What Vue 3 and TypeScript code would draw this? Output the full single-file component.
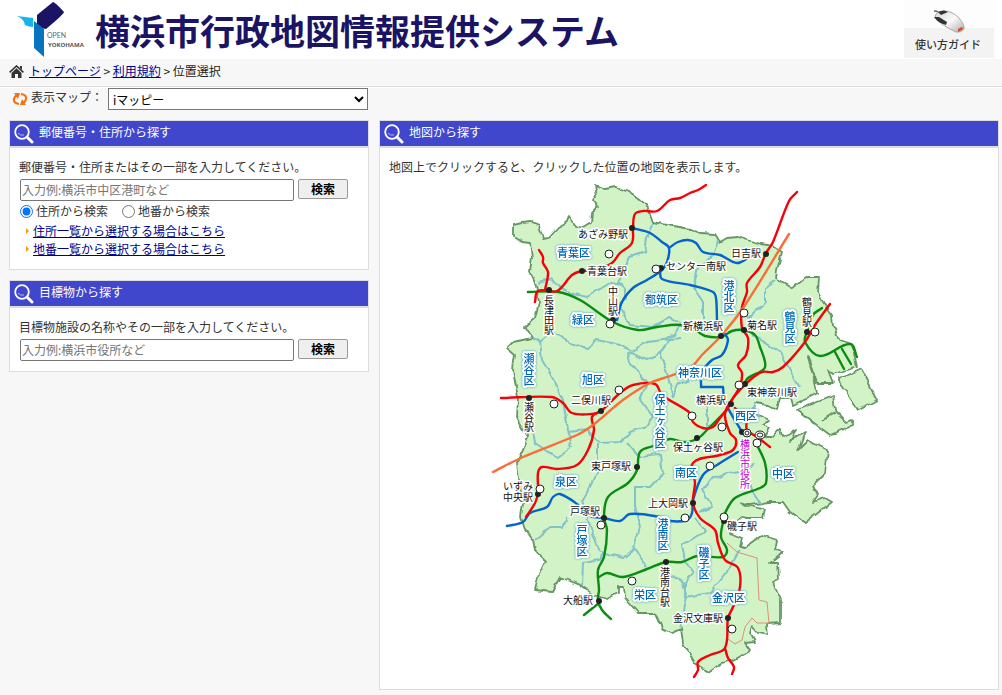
<script setup lang="ts">
import { ref } from 'vue'

interface Label { text: string; x: number; y: number; vertical?: boolean }
type Point = [number, number]

const mapKind = ref('imappy')
const searchMode = ref('address')
const addressQuery = ref('')
const landmarkQuery = ref('')

const wards: Label[] = [
  { text: '青葉区', x: 557, y: 257 },
  { text: '都筑区', x: 645, y: 304 },
  { text: '緑区', x: 572, y: 324 },
  { text: '旭区', x: 582, y: 384 },
  { text: '神奈川区', x: 678, y: 377 },
  { text: '西区', x: 735, y: 420 },
  { text: '南区', x: 675, y: 477 },
  { text: '中区', x: 772, y: 478 },
  { text: '泉区', x: 555, y: 486 },
  { text: '栄区', x: 634, y: 599 },
  { text: '金沢区', x: 712, y: 602 },
  { text: '港北区', x: 729, y: 280, vertical: true },
  { text: '鶴見区', x: 790, y: 311, vertical: true },
  { text: '瀬谷区', x: 529, y: 353, vertical: true },
  { text: '保土ヶ谷区', x: 660, y: 394, vertical: true },
  { text: '戸塚区', x: 582, y: 524, vertical: true },
  { text: '港南区', x: 663, y: 518, vertical: true },
  { text: '磯子区', x: 704, y: 547, vertical: true },
]

const stations: Label[] = [
  { text: 'あざみ野駅', x: 578, y: 238 },
  { text: '青葉台駅', x: 587, y: 275 },
  { text: 'センター南駅', x: 666, y: 270 },
  { text: '日吉駅', x: 731, y: 257 },
  { text: '新横浜駅', x: 683, y: 330 },
  { text: '菊名駅', x: 747, y: 329 },
  { text: '横浜駅', x: 696, y: 404 },
  { text: '東神奈川駅', x: 747, y: 396 },
  { text: '保土ヶ谷駅', x: 673, y: 451 },
  { text: '二俣川駅', x: 571, y: 404 },
  { text: '東戸塚駅', x: 591, y: 470 },
  { text: '戸塚駅', x: 570, y: 515 },
  { text: '上大岡駅', x: 648, y: 507 },
  { text: '磯子駅', x: 727, y: 530 },
  { text: '大船駅', x: 563, y: 604 },
  { text: '金沢文庫駅', x: 673, y: 622 },
  { text: '長津田駅', x: 549, y: 295, vertical: true },
  { text: '中山駅', x: 613, y: 286, vertical: true },
  { text: '鶴見駅', x: 807, y: 297, vertical: true },
  { text: '瀬谷駅', x: 529, y: 402, vertical: true },
  { text: '港南台駅', x: 665, y: 567, vertical: true },
]

const stationDots: Point[] = [
  [632, 228], [582, 271], [549, 290], [661, 268], [613, 320], [766, 254], [721, 336], [744, 330],
  [807, 332], [529, 398], [601, 411], [637, 467], [538, 494], [604, 518], [731, 404], [745, 384],
  [697, 438], [742, 432], [693, 503], [724, 521], [666, 562], [599, 601], [728, 618],
]

const officeDots: Point[] = [
  [609, 254], [656, 269], [610, 324], [744, 313], [815, 332], [619, 390], [554, 404], [739, 385],
  [692, 416], [722, 427], [757, 443], [710, 466], [685, 518], [540, 489], [601, 525], [632, 581],
  [724, 517], [732, 629],
]

const land = [
  'M595 185L605 189L617 187L628 192L637 198L648 208L653 222L667 225L690 229L700 233L715 234L720 242L727 238L738 237L760 244L773 246L782 252L777 270L776 278L793 288L803 280L808 277L819 277L818 292L823 303L832 315L833 327L840 340L852 344L857 367L833 374L828 370L833 383L817 383L808 357L815 383L817 393L793 405L791 398L780 398L777 410L767 405L755 403L752 411L765 418L770 420L762 425L770 428L765 437L772 437L780 428L782 437L790 434L797 430L790 441L805 432L798 450L808 440L813 443L828 450L825 473L813 485L818 495L813 502L825 498L832 502L805 523L790 512L783 502L767 502L745 506L740 503L765 510L763 518L747 518L742 517L734 524L730 533L742 538L740 546L745 547L762 535L777 540L775 550L783 552L778 557L770 563L778 563L779 579L773 582L781 600L781 623L767 624L768 635L758 633L752 626L750 633L755 642L745 643L750 650L733 660L722 663L708 672L695 663L683 643L681 629L672 633L662 628L655 613L638 613L625 598L624 586L618 586L618 593L607 599L593 595L580 585L560 577L552 592L535 590L540 570L547 562L535 550L533 540L525 530L521 517L523 503L520 487L517 463L523 450L528 437L517 417L518 397L513 370L515 355L507 348L513 342L532 338L525 327L535 318L539 302L536 285L530 272L532 258L530 243L522 242L513 237L513 225L522 223L532 222L539 225L543 239L548 238L558 227L567 222L569 215L575 226L583 228L591 223L592 213L598 207L593 200L597 195Z',
  'M797 410L833 395L835 410L847 422L852 420L852 426L830 435Z',
  'M839 379L862 369L877 400L858 410L845 390L839 382Z',
  'M823 420L835 412',
]

const wardBorders = [
  'M653 223L647 238L645 252L630 257L622 275L618 283L625 290L625 298L620 308L630 325L653 327L670 318L680 323L675 335L662 340',
  'M538 283L550 280L570 293L587 297L610 283L623 285',
  'M532 338L540 342L552 332L570 343L587 348L597 340L620 345L632 352L647 342L680 338',
  'M540 340L542 360L552 377L563 400L568 430L572 447L558 458L535 443L533 430',
  'M568 432L587 430L600 443L620 442L630 432L647 427L653 417L640 400L647 383L630 363L628 353L647 360L660 353L670 340',
  'M660 353L667 373L673 397L677 385L690 380',
  'M597 443L597 473L583 500L588 520L600 552',
  'M567 517L563 528L550 528L535 540',
  'M627 442L640 457L660 455L663 473L650 487L635 487L635 507L640 527L633 550L623 558L603 552L600 560L583 563L582 585',
  'M633 545L642 560L645 568M667 572L683 583L687 597L680 628',
  'M695 517L705 532L682 545L685 561L693 573L685 583L685 597L710 593L730 567L740 550',
  'M718 240L713 255L698 268L693 287L703 302L703 318',
  'M775 280L765 288L765 302L748 318L753 335L780 352L800 388',
  'M753 463L748 470L727 473L713 478L703 490L712 507L698 513M748 475L753 493L760 503',
  'M723 403L707 400L707 425L712 428M755 403L752 410L760 417',
]

const blueLines = [
  'M632 228L650 233L662 242L669 248L667 262L662 270L647 280L633 288L622 302L617 320',
  'M669 248L678 242L688 240L696 243L703 252L720 255L737 263L748 258',
  'M660 270L662 279L690 285L713 292L716 298L717 320M725 334L728 340L722 355L712 360L702 372L701 387M701 387L723 387M723 387L725 402L742 432',
  'M738 452L717 465L703 475L693 500L692 513L687 520L670 521L660 517L630 514L620 521L604 518L590 516L577 504L560 494L553 497L547 507L530 513L523 522L507 526',
]

const greenLines = [
  'M528 292L558 292L580 300L613 322L638 330L657 327L680 325L698 332L705 336L721 337L732 331L743 330L755 335L760 347L765 362L764 369L748 378L743 386',
  'M822 308L813 315L807 332L805 342L820 356L850 344L857 357M835 352L844 369M842 349L851 364',
  'M727 410L707 430L697 439L683 442L670 439L653 446L640 452L637 470L628 483L608 497L604 517L607 530L604 557L598 570L599 590L598 600L602 610L611 619M599 603L584 615',
  'M599 577L607 573L623 577L647 569L666 562L682 562L697 556L723 557L727 550L721 537L724 518L725 513L735 498L760 488L766 483L765 463L757 445',
]

const redLines = [
  'M706 185L698 190L690 193L680 198L670 200L657 211L643 211L635 214L633 228L632 243L620 253L612 263L595 270L582 271L572 275L557 291L538 291L535 302',
  'M539 250L543 257L543 263L548 272L545 290',
  'M797 192L789 201L773 242L766 253L760 267L747 283L747 292L742 307L742 328L748 338L746 355L738 365L742 373L740 386L732 400',
  'M830 304L815 325L805 342L783 367L773 372L762 372L750 380L733 398L725 414L730 433L736 440L733 450L720 455L693 463L695 483L693 503L700 518L715 530L718 543L725 560L738 568L740 587L733 607L728 618L725 648L710 655L698 662L698 670L694 677M725 648L728 658L734 667L732 674',
  'M501 398L552 397L563 403L572 413L592 414L601 411L620 393L633 385L655 384L662 395L690 413L693 422L703 428L713 427L720 418L730 405',
  'M601 411L592 417L594 430L588 450L577 465L557 469L542 467L538 473L538 493L535 503L526 517',
  'M735 408L746 420L747 430L757 437L770 447',
]

const shinkansen = 'M789 234L743 308L720 337L702 355L690 368L670 376L650 383L623 400L593 425L577 435L523 457L493 472'
const seasideLine = 'M727 543L737 552L757 558L759 600L767 602L769 623L757 623L752 618L745 627L742 640L735 644L728 639'

/** Turns each polyline of a track into a curve that passes through its points. */
function smooth(track: string): string {
  return track.split('M').filter(Boolean).map((part) => {
    const pts = part.split('L').map((p) => p.split(' ').map(Number) as Point)
    let d = `M${pts[0].join(' ')}`
    for (let i = 0; i < pts.length - 1; i++) {
      const a = pts[Math.max(i - 1, 0)]
      const b = pts[i]
      const c = pts[i + 1]
      const e = pts[Math.min(i + 2, pts.length - 1)]
      const k = Math.hypot(c[0] - b[0], c[1] - b[1]) / 3
      const inLen = Math.hypot(c[0] - a[0], c[1] - a[1]) || 1
      const outLen = Math.hypot(e[0] - b[0], e[1] - b[1]) || 1
      const c1 = [b[0] + (c[0] - a[0]) * k / inLen, b[1] + (c[1] - a[1]) * k / inLen]
      const c2 = [c[0] - (e[0] - b[0]) * k / outLen, c[1] - (e[1] - b[1]) * k / outLen]
      d += `C${c1.join(' ')} ${c2.join(' ')} ${c.join(' ')}`
    }
    return d
  }).join('')
}
</script>

<template>
  <div class="page">
    <header class="masthead">
      <svg class="logo" viewBox="0 0 90 59" role="img" aria-label="OPEN YOKOHAMA">
        <path fill="#16b4ee" d="M17 16L33 18V27Q29 27 25 25Q24 19 17 16Z" />
        <path fill="#1b1464" d="M53 2Q55 2 64 12Q64 14 46 29Q40 28 37 25V15Z" />
        <path fill="#0874bf" d="M34 21L44 29V57L34 48Z" />
        <text class="logo-open" x="47" y="38">OPEN</text>
        <text class="logo-city" x="48" y="47">YOKOHAMA</text>
      </svg>
      <h1>横浜市行政地図情報提供システム</h1>
      <a class="guide" href="#guide">
        <svg class="mouse" viewBox="0 0 36 26" aria-hidden="true">
          <defs>
            <linearGradient id="shell" x1="0" y1="0" x2="1" y2="1">
              <stop offset="0" stop-color="#d4d4d4" /><stop offset=".5" stop-color="#fafafa" /><stop offset="1" stop-color="#aaa" />
            </linearGradient>
          </defs>
          <path d="M2 3Q7 3 8 7" fill="none" stroke="#666" stroke-width="1.5" />
          <path d="M3 10Q3 3 13 3Q20 3 27 10Q33 17 32 21Q29 25 24 24Q9 17 3 10Z" fill="url(#shell)" stroke="#aaa" />
          <path d="M6 4Q12 1 16 4L9 7ZM2 9L7 9L15 14L14 17Q6 15 2 9Z" fill="#333" />
          <path d="M26 21L30 19L31 21L26 24Z" fill="#df471d" />
        </svg>
        <span>使い方ガイド</span>
      </a>
    </header>

    <nav class="crumbs" aria-label="パンくず">
      <svg class="home" viewBox="0 0 15 13" aria-hidden="true">
        <path fill="none" stroke="#333" stroke-width="1.6" d="M0.6 7.4L7.5 1L14.4 7.4" />
        <path fill="#333" d="M2.5 8L7.5 3.2L12.5 8V13H9V9H6V13H2.5ZM11 1H13V5L11 3Z" />
      </svg>
      <a href="#top">トップページ</a><span class="sep">&gt;</span><a href="#terms">利用規約</a><span class="sep">&gt;</span><span>位置選択</span>
    </nav>

    <div class="map-kind">
      <svg class="swap" viewBox="0 0 16 16" aria-hidden="true">
        <g fill="none" stroke="#f47216" stroke-width="2.2">
          <path d="M7 13Q1 12 2 8Q2 6 5 4" />
          <path d="M9 3Q15 4 14 8Q14 10 11 12" />
        </g>
        <path fill="#f47216" d="M2 2L8 2L6 8ZM14 14L8 14L10 8Z" />
      </svg>
      <label for="map-kind">表示マップ：</label>
      <select id="map-kind" v-model="mapKind">
        <option value="imappy">iマッピー</option>
      </select>
    </div>

    <main class="columns">
      <div class="side">
        <section class="panel">
          <h2>
            <svg class="lens" viewBox="0 0 20 20" aria-hidden="true">
              <circle cx="8" cy="8" r="6.8" /><path d="M4 9Q6 12 10 11" class="glint" /><path d="M13 13L18 18" class="grip" />
            </svg>
            郵便番号・住所から探す
          </h2>
          <form class="body" @submit.prevent>
            <label class="lead" for="address">郵便番号・住所またはその一部を入力してください。</label>
            <div class="row">
              <input id="address" v-model="addressQuery" type="text" placeholder="入力例:横浜市中区港町など">
              <button type="submit">検索</button>
            </div>
            <div class="modes">
              <label><input v-model="searchMode" type="radio" name="mode" value="address">住所から検索</label>
              <label><input v-model="searchMode" type="radio" name="mode" value="lot">地番から検索</label>
            </div>
            <ul>
              <li><a href="#address-list">住所一覧から選択する場合はこちら</a></li>
              <li><a href="#lot-list">地番一覧から選択する場合はこちら</a></li>
            </ul>
          </form>
        </section>

        <section class="panel">
          <h2>
            <svg class="lens" viewBox="0 0 20 20" aria-hidden="true">
              <circle cx="8" cy="8" r="6.8" /><path d="M4 9Q6 12 10 11" class="glint" /><path d="M13 13L18 18" class="grip" />
            </svg>
            目標物から探す
          </h2>
          <form class="body" @submit.prevent>
            <label class="lead" for="landmark">目標物施設の名称やその一部を入力してください。</label>
            <div class="row">
              <input id="landmark" v-model="landmarkQuery" type="text" placeholder="入力例:横浜市役所など">
              <button type="submit">検索</button>
            </div>
          </form>
        </section>
      </div>

      <section class="panel map-panel">
        <h2>
          <svg class="lens" viewBox="0 0 20 20" aria-hidden="true">
            <circle cx="8" cy="8" r="6.8" /><path d="M4 9Q6 12 10 11" class="glint" /><path d="M13 13L18 18" class="grip" />
          </svg>
          地図から探す
        </h2>
        <div class="body map-body">
          <p class="lead">地図上でクリックすると、クリックした位置の地図を表示します。</p>
          <svg class="map" viewBox="389 178 500 505" role="img" aria-label="横浜市の地図">
            <defs>
              <filter id="rough" x="-5%" y="-5%" width="110%" height="110%" color-interpolation-filters="sRGB">
                <feTurbulence type="fractalNoise" baseFrequency="0.12" numOctaves="1" seed="4" />
                <feDisplacementMap in="SourceGraphic" scale="6" xChannelSelector="R" yChannelSelector="G" />
              </filter>
            </defs>
            <g filter="url(#rough)">
              <path v-for="d in land" :key="d" :d="d" class="land" />
              <path v-for="d in wardBorders" :key="d" :d="d" class="border" />
            </g>
            <path :d="seasideLine" class="seaside" />
            <path v-for="d in greenLines" :key="d" :d="smooth(d)" class="rail green" />
            <path v-for="d in blueLines" :key="d" :d="smooth(d)" class="rail blue" />
            <path v-for="d in redLines" :key="d" :d="smooth(d)" class="rail red" />
            <path :d="smooth(shinkansen)" class="rail orange" />
            <text v-for="s in stations" :key="s.text" :x="s.x" :y="s.y" class="station" :class="{ vertical: s.vertical }">{{ s.text }}</text>
            <text class="station"><tspan x="503" y="490">いずみ</tspan><tspan x="503" y="501">中央駅</tspan></text>
            <text v-for="w in wards" :key="w.text" :x="w.x" :y="w.y" class="ward" :class="{ vertical: w.vertical }">{{ w.text }}</text>
            <text x="745" y="439" class="station vertical hall">横浜市役所</text>
            <circle v-for="p in stationDots" :key="p.join()" :cx="p[0]" :cy="p[1]" r="3" fill="#222" />
            <circle v-for="p in officeDots" :key="p.join()" :cx="p[0]" :cy="p[1]" r="4" class="office" />
            <g class="office">
              <circle cx="747" cy="433" r="4" /><circle cx="747" cy="433" r="2" />
              <ellipse cx="760" cy="435" rx="5" ry="4" /><ellipse cx="760" cy="435" rx="3" ry="2" />
            </g>
          </svg>
        </div>
      </section>
    </main>
  </div>
</template>

<style>
body { background: #f7f7f7; }
</style>

<style scoped>
.page {
  font: 12px/18px "Noto Sans CJK JP", sans-serif;
  color: #333;
  padding-bottom: 5px;
}
.masthead {
  display: flex;
  height: 59px;
  background: #fff;
  padding-right: 8px;
}
.logo { width: 90px; height: 59px; flex: none; }
.logo-open { font: 7px Lato, sans-serif; fill: #666; }
.logo-city { font: bold 6px "Open Sans", sans-serif; fill: #555; }
h1 {
  margin: 0;
  padding-left: 5px;
  font-size: 35px;
  line-height: 59px;
  font-weight: 700;
  color: #1b1464;
  white-space: nowrap;
}
.guide {
  margin-left: auto;
  width: 90px;
  height: 58px;
  background: linear-gradient(#fdfdfd 28px, #f3f3f3 28px);
  color: #333;
  font-size: 11px;
  font-weight: 500;
  line-height: 18px;
  text-align: center;
  text-decoration: none;
}
.mouse { display: block; width: 36px; height: 26px; margin: 8px 0 1px 28px; }
.guide span { display: block; padding-right: 2px; }
.crumbs {
  display: flex;
  align-items: center;
  height: 24px;
  padding: 0 0 3px 9px;
  border-bottom: 1px solid #ddd;
  box-shadow: 0 1px #fff;
  color: #222;
}
.home { width: 15px; height: 13px; margin-right: 5px; }
a { color: #00008b; }
.sep { width: 12px; text-align: center; }
.map-kind {
  display: flex;
  height: 33px;
  padding: 1px 0 0 12px;
  box-sizing: border-box;
}
.swap { width: 16px; height: 16px; margin-top: 3px; }
.map-kind label { width: 80px; padding-left: 3px; box-sizing: border-box; }
.map-kind select {
  width: 260px;
  height: 22px;
  margin-left: 0;
  border: 1px solid #767676;
  background-color: #fff;
  font: inherit;
  color: #000;
}
.columns {
  display: flex;
  gap: 10px;
  align-items: flex-start;
  padding: 0 3px 0 9px;
}
.side { flex: none; width: 360px; display: grid; gap: 10px; box-sizing: border-box; }
.panel { border: 1px solid #ddd; background: #fff; }
h2 {
  display: flex;
  gap: 5px;
  height: 25px;
  margin: 0;
  padding-left: 4px;
  background: #4047cc;
  border-bottom: 2px solid #ddd;
  color: #fff;
  font-size: 12px;
  line-height: 22px;
  font-weight: 400;
}
.lens { width: 20px; height: 20px; margin-top: 3px; fill: none; stroke: #fff; }
.lens circle { stroke-width: 1.8; }
.glint { stroke: #b0b4f4; stroke-width: 1; }
.grip { stroke-width: 3; stroke-linecap: round; }
.body { padding: 10px 9px 10px; }
.row { padding-left: 1px; }
.map-panel { flex: 1; min-width: 0; }
.map-body { padding-bottom: 6px; }
.lead { display: block; margin: 0; height: 21px; line-height: 18px; }
.map-body .lead { height: 20px; }
.map { display: block; width: 500px; max-width: 100%; }
.row { display: flex; align-items: flex-start; gap: 4px; }
.row input {
  width: 274px;
  height: 22px;
  box-sizing: border-box;
  padding: 0 1px 1px;
  border: 1px solid #767676;
  border-radius: 2px;
  font: inherit;
}
.row input::placeholder { color: #757575; }
.row button {
  width: 50px;
  height: 20px;
  padding: 0;
  border: 1px solid #999;
  border-radius: 2px;
  background: #efefef;
  font: bold 12px/16px "Noto Sans CJK JP", sans-serif;
  color: #000;
}
.modes { display: flex; gap: 14px; height: 21px; align-items: flex-start; padding: 1px 0 0 1px; box-sizing: border-box; }
.modes label { display: flex; gap: 3px; align-items: center; line-height: 18px; }
.modes input { width: 13px; height: 13px; margin: 0; }
ul { margin: 0; padding: 0 0 1px 7px; list-style: none; }
li { display: flex; align-items: center; line-height: 18px; }
li::before {
  content: "";
  margin-right: 4px;
  border-left: 3px solid #ff9a00;
  border-top: 3px solid transparent;
  border-bottom: 3px solid transparent;
}
.land { fill: #d2f3c6; stroke: #669666; stroke-width: 1.8; stroke-linejoin: round; }
.border { fill: none; stroke: #84c2c9; stroke-width: 2; stroke-linejoin: round; }
.rail { fill: none; stroke-width: 2.4; stroke-linejoin: round; stroke-linecap: round; }
.green { stroke: #0a8c12; }
.blue { stroke: #0663cb; }
.red { stroke: #f80008; }
.orange { stroke: #fc6c38; }
.seaside { fill: none; stroke: #dd8f76; stroke-width: 1; }
.station, .ward { paint-order: stroke; stroke: #fff; stroke-linejoin: round; }
.station { font-size: 10px; stroke-width: 3px; fill: #111; }
.ward { font-size: 11px; font-weight: 500; stroke-width: 4px; fill: #0068b7; filter: drop-shadow(0 0 1px #3f98c8); }
.vertical { writing-mode: vertical-rl; }
.hall { fill: #b800c8; }
.office { fill: #fff; stroke: #222; stroke-width: 1; }
</style>
